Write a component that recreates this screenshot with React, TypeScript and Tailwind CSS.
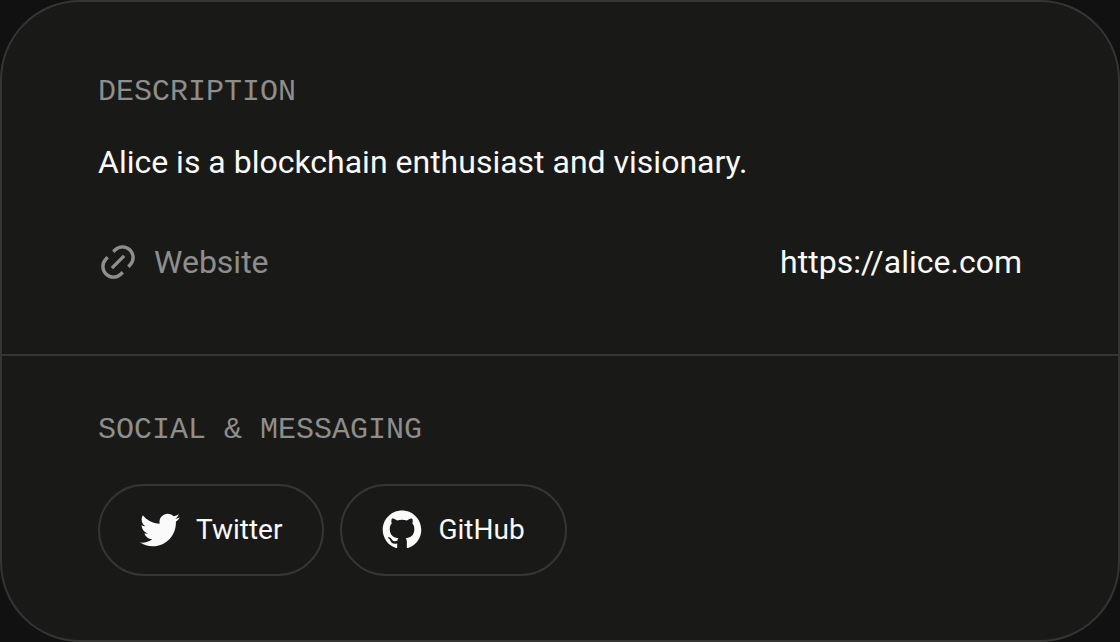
import type { ReactNode } from "react";
import { FaTwitter } from "react-icons/fa";

function LinkIcon() {
  return (
    <svg viewBox="0 0 40 40" className="size-10" fill="none" stroke="currentColor" strokeWidth="3.4" aria-hidden="true">
      <path d="M15.3 9.7 17 8A10.6 10.6 0 0 1 32 23L30.3 24.7" />
      <path d="M9.7 15.3 8 17A10.6 10.6 0 0 0 23 32L24.7 30.3" />
      <path d="M13.9 26.1 26.1 13.9" />
    </svg>
  );
}

function GitHubIcon() {
  return (
    <svg viewBox="-0.3 -0.2 16.6 16.6" className="size-10" fill="currentColor" aria-hidden="true">
      <path d="M8 0C3.58 0 0 3.58 0 8c0 3.54 2.29 6.53 5.47 7.59.4.07.55-.17.55-.38 0-.19-.01-.82-.01-1.49-2.01.37-2.53-.49-2.69-.94-.09-.23-.48-.94-.82-1.13-.28-.15-.68-.52-.01-.53.63-.01 1.08.58 1.23.82.72 1.21 1.87.87 2.33.66.07-.52.28-.87.51-1.07-1.78-.2-3.64-.89-3.64-3.95 0-.87.31-1.59.82-2.15-.08-.2-.36-1.02.08-2.12 0 0 .67-.21 2.2.82.64-.18 1.32-.27 2-.27s1.36.09 2 .27c1.53-1.04 2.2-.82 2.2-.82.44 1.1.16 1.92.08 2.12.51.56.82 1.27.82 2.15 0 3.07-1.87 3.75-3.65 3.95.29.25.54.73.54 1.48 0 1.07-.01 1.93-.01 2.2 0 .21.15.46.55.38A8.01 8.01 0 0 0 16 8c0-4.42-3.58-8-8-8z" />
    </svg>
  );
}

function SectionTitle({ children }: { children: ReactNode }) {
  return (
    <h2 className="font-['Liberation_Mono',monospace] text-[30px] leading-10 text-[#8e8e8d]">
      {children}
    </h2>
  );
}

function SocialLink({ href, icon, label }: { href: string; icon: ReactNode; label: string }) {
  return (
    <a
      href={href}
      className="flex items-center gap-4 rounded-full border-2 border-[#353534] px-10 py-6 text-[28px] leading-10"
    >
      {icon}
      {label}
    </a>
  );
}

export default function App() {
  return (
    <main className="min-h-screen bg-[#111111] font-['Roboto',sans-serif] text-[#fafafa]">
      <article className="rounded-[80px] border-2 border-[#353534] bg-[#191917]">
        <section className="border-b-2 border-[#353534] px-24 pt-[70px] pb-[68px]">
          <SectionTitle>DESCRIPTION</SectionTitle>
          <p className="mt-[26px] text-[32px] leading-12">Alice is a blockchain enthusiast and visionary.</p>
          <dl className="mt-13 flex items-center justify-between text-[32px] leading-12">
            <dt className="flex items-center gap-4 text-[#8e8e8d]">
              <LinkIcon />
              Website
            </dt>
            <dd>
              <a href="https://alice.com">https://alice.com</a>
            </dd>
          </dl>
        </section>
        <section className="px-24 pt-[54px] pb-16">
          <SectionTitle>SOCIAL &amp; MESSAGING</SectionTitle>
          <nav aria-label="Social links" className="mt-[34px] flex flex-wrap gap-4">
            <SocialLink href="https://twitter.com" icon={<FaTwitter className="size-10" />} label="Twitter" />
            <SocialLink href="https://github.com" icon={<GitHubIcon />} label="GitHub" />
          </nav>
        </section>
      </article>
    </main>
  );
}
